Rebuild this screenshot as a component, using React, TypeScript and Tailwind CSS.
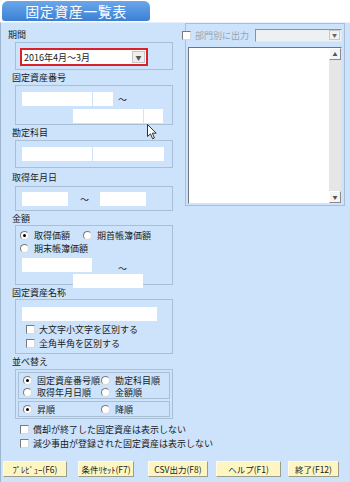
import React from "react";

const font = { fontFamily: '"Noto Sans CJK JP", "Noto Sans", sans-serif' };

function Field({ w }: { w: string }) {
  return <div className={`${w} h-[14px] bg-white`} />;
}

function Label({ children, h, pl = "pl-[10px]" }: { children: React.ReactNode; h: string; pl?: string }) {
  return <div className={`${h} ${pl} flex items-center text-[9px] leading-none whitespace-nowrap text-[#1a1a1a]`}>{children}</div>;
}

function Radio({ checked, label, w }: { checked?: boolean; label: string; w?: string }) {
  return (
    <div className={`flex items-center whitespace-nowrap ${w ?? ""}`}>
      <span className="w-[9px] h-[9px] shrink-0 rounded-full bg-white border border-t-[#7a7a7a] border-l-[#7a7a7a] border-r-[#d8d8d8] border-b-[#d8d8d8] flex items-center justify-center">
        {checked && <span className="w-[3px] h-[3px] rounded-full bg-black" />}
      </span>
      <span className="ml-[5px] text-[9px] leading-none">{label}</span>
    </div>
  );
}

function Check({ label, muted }: { label: string; muted?: boolean }) {
  return (
    <div className="flex items-center whitespace-nowrap">
      <span className="w-[9px] h-[9px] shrink-0 bg-white border border-t-[#7a7a7a] border-l-[#7a7a7a] border-r-[#d8d8d8] border-b-[#d8d8d8]" />
      <span className={`ml-[4px] text-[9px] leading-none ${muted ? "text-[#9aa3ad]" : ""}`}>{label}</span>
    </div>
  );
}

function Btn({ label, w, ml }: { label: string; w: string; ml: string }) {
  return (
    <div
      className={`${w} ${ml} h-[16px] bg-[#fdf6c3] border border-t-[#fffbe6] border-l-[#fffbe6] border-r-[#9c9c8a] border-b-[#9c9c8a] flex items-center justify-center text-[8.5px] leading-none whitespace-nowrap text-[#1a1a1a]`}
    >
      {label}
    </div>
  );
}

export default function App() {
  const box = "ml-[13px] w-[158px] border border-[#a9bfd6]";
  return (
    <div className="relative w-[350px] h-[482px] bg-white overflow-hidden text-[#1a1a1a]" style={font}>
      <div className="h-[22px] pl-[2px] pt-[1px]">
        <div className="w-[148px] h-[20px] rounded-t-[6px] rounded-b-[3px] bg-gradient-to-b from-[#6aa6ea] to-[#3b80d6] flex items-center justify-center text-[14px] leading-none text-white tracking-[0.5px]">
          固定資産一覧表
        </div>
      </div>

      <div className="h-[460px] bg-[#cce3fb] border-l border-[#9fb6cf] border-t border-t-[#e6f1fd]">
        <div className="flex">
          {/* left column */}
          <div className="w-[180px] pl-[1px]">
            <div className="h-[3px]" />
            <Label h="h-[16px]" pl="pl-[6px]">期間</Label>
            <div className={`${box} h-[28px] pt-[5px] pl-[4px]`}>
              <div className="w-[128px] h-[18px] border-2 border-[#d8212a] bg-white flex items-center">
                <span className="flex-1 pl-[2px] text-[9px] leading-none whitespace-nowrap">2016年4月～3月</span>
                <span className="w-[13px] h-[12px] mr-[1px] bg-[#eeeeee] border border-[#c5c5c5] flex items-center justify-center text-[6px] text-[#555]">▼</span>
              </div>
            </div>

            <Label h="h-[15px]">固定資産番号</Label>
            <div className={`${box} h-[40px] pt-[6px] pl-[6px]`}>
              <div className="flex items-center">
                <Field w="w-[70px]" />
                <div className="w-[20px] h-[14px] bg-white ml-[1px]" />
                <span className="ml-[5px] text-[9px] leading-none">～</span>
              </div>
              <div className="flex mt-[3px] pl-[51px]">
                <Field w="w-[70px]" />
                <div className="w-[19px] h-[14px] bg-white ml-[1px]" />
              </div>
            </div>

            <Label h="h-[15px]">勘定科目</Label>
            <div className={`${box} h-[28px] pt-[6px] pl-[6px] flex`}>
              <Field w="w-[70px]" />
              <div className="w-[71px] h-[14px] bg-white ml-[1px]" />
            </div>

            <Label h="h-[18px]">取得年月日</Label>
            <div className={`${box} h-[25px] pt-[5px] pl-[6px]`}>
              <div className="flex items-center">
                <Field w="w-[46px]" />
                <span className="ml-[12px] w-[20px] text-[9px] leading-none">～</span>
                <Field w="w-[46px]" />
              </div>
            </div>

            <Label h="h-[14px]">金額</Label>
            <div className={`${box} h-[60px] pt-[3px] pl-[4px]`}>
              <div className="flex h-[13px] items-center">
                <Radio checked label="取得価額" w="w-[63px]" />
                <Radio label="期首帳簿価額" />
              </div>
              <div className="flex h-[13px] items-center">
                <Radio label="期末帳簿価額" />
              </div>
              <div className="flex items-center pl-[2px] mt-[1px]">
                <Field w="w-[70px]" />
                <span className="ml-[26px] mt-[8px] text-[9px] leading-none">～</span>
              </div>
              <div className="mt-[1px] pl-[53px]">
                <Field w="w-[70px]" />
              </div>
            </div>

            <Label h="h-[14px]">固定資産名称</Label>
            <div className={`${box} h-[55px] pt-[7px] pl-[6px]`}>
              <Field w="w-[135px]" />
              <div className="pl-[4px] mt-[4px] flex flex-col gap-[5px]">
                <Check label="大文字小文字を区別する" />
                <Check label="全角半角を区別する" />
              </div>
            </div>

            <Label h="h-[15px]">並べ替え</Label>
            <div className={`${box} h-[50px] p-[2px]`}>
              <div className="h-[27px] border border-[#a9bfd6] pl-[4px] pt-[1px]">
                <div className="flex h-[12px] items-center">
                  <Radio checked label="固定資産番号順" w="w-[78px]" />
                  <Radio label="勘定科目順" />
                </div>
                <div className="flex h-[12px] items-center">
                  <Radio label="取得年月日順" w="w-[78px]" />
                  <Radio label="金額順" />
                </div>
              </div>
              <div className="h-[16px] mt-[2px] border border-[#a9bfd6] pl-[4px] flex items-center">
                <Radio checked label="昇順" w="w-[78px]" />
                <Radio label="降順" />
              </div>
            </div>
          </div>

          {/* right column */}
          <div className="ml-[4px] w-[160px] h-[183px] border border-[#a9bfd6] px-[2px] pt-[5px]">
            <div className="flex items-center h-[12px]">
              <div className="ml-[-6px]">
                <Check label="部門別に出力" muted />
              </div>
              <div className="ml-[6px] w-[96px] h-[13px] bg-[#eef1f4] border border-t-[#8d9298] border-l-[#8d9298] border-r-[#e6e6e6] border-b-[#e6e6e6] flex justify-end items-center pr-[1px]">
                <span className="w-[11px] h-[10px] bg-[#f2f2f2] border border-[#c9c9c9] flex items-center justify-center text-[5px] text-[#666]">▼</span>
              </div>
            </div>
            <div className="mt-[6px] w-[154px] h-[157px] bg-white border border-t-[#6f757c] border-l-[#6f757c] border-r-[#e2e2e2] border-b-[#e2e2e2] flex justify-end">
              <div className="w-[12px] h-full bg-[#e6e6e6] flex flex-col justify-between">
                <span className="h-[12px] bg-[#f4f4f4] border border-t-white border-l-white border-r-[#8a8a8a] border-b-[#8a8a8a] flex items-center justify-center text-[5px] text-[#555]">▲</span>
                <span className="h-[12px] bg-[#f4f4f4] border border-t-white border-l-white border-r-[#8a8a8a] border-b-[#8a8a8a] flex items-center justify-center text-[5px] text-[#555]">▼</span>
              </div>
            </div>
          </div>
        </div>

        <div className="pl-[19px] pt-[6px] flex flex-col gap-[5px]">
          <Check label="償却が終了した固定資産は表示しない" />
          <Check label="減少事由が登録された固定資産は表示しない" />
        </div>

        <div className="flex mt-[13px]">
          <Btn label="ﾌﾟﾚﾋﾞｭｰ(F6)" w="w-[64px]" ml="ml-[2px]" />
          <Btn label="条件ﾘｾｯﾄ(F7)" w="w-[56px]" ml="ml-[11px]" />
          <Btn label="CSV出力(F8)" w="w-[60px]" ml="ml-[14px]" />
          <Btn label="ヘルプ(F1)" w="w-[65px]" ml="ml-[8px]" />
          <Btn label="終了(F12)" w="w-[51px]" ml="ml-[7px]" />
        </div>
      </div>

      {/* mouse pointer */}
      <svg className="absolute left-[147px] top-[124px]" width="10" height="16" viewBox="0 0 10 16">
        <path d="M0.5 0.5 L0.5 12.5 L3.5 9.8 L5.6 14.8 L7.4 14 L5.4 9.2 L9.2 9.2 Z" fill="white" stroke="#333" strokeWidth="1" />
      </svg>
    </div>
  );
}
